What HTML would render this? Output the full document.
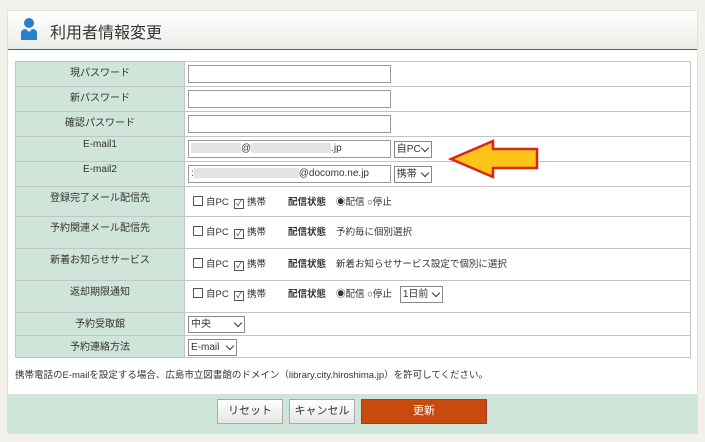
<!DOCTYPE html><html><head><meta charset="utf-8"><style>
body{margin:0;width:705px;height:442px;background:#f2f1ec;font-family:"Liberation Sans","Noto Sans CJK JP",sans-serif;font-size:10px;color:#333;position:relative;overflow:hidden}
.p{position:absolute;left:7px;top:10px;width:689px;height:422px;background:#fff;border:1px solid #e2e2dc}
.hd{position:absolute;left:0;top:0;width:689px;height:38px;background:linear-gradient(#fff,#eceeea);border-bottom:1px solid #3f6655}
.hd span{position:absolute;left:42px;top:8px;font-size:16px;color:#333}
table{position:absolute;left:7px;top:50px;width:676px;border-collapse:collapse}
td{border:1px solid #c4c4c4;padding:0;vertical-align:top}
td.l{background:#cfe5da;width:168px;text-align:center;padding-top:2px}
td.v{padding-left:3px}
.in{display:inline-block;border:1px solid #999;height:18px;background:#fff;vertical-align:middle;margin-top:3px;line-height:16px;font-size:10px;box-sizing:border-box;white-space:nowrap;overflow:hidden}
.sel{display:inline-block;position:relative;border:1px solid #888;height:17px;background:#fff;margin-top:3px;line-height:15px;box-sizing:border-box;padding-left:2px;font-size:10px;vertical-align:middle;white-space:nowrap}
.sel i{position:absolute;right:3px;top:5px;width:5px;height:5px;border-right:1.3px solid #333;border-bottom:1.3px solid #333;transform:rotate(45deg);top:3px}
.c{padding:7px 0 0 8px;font-size:9.5px;white-space:nowrap}
.cb{display:inline-block;width:8px;height:8px;border:1px solid #555;vertical-align:-1px;margin-right:3px;font-size:8px;line-height:8px;text-align:center}
b{margin:0 10px 0 22px}
.bl{display:inline-block;background:#e4e4e4;height:10px;vertical-align:middle}
.note{position:absolute;left:7px;top:356px;font-size:9.5px}
.ft{position:absolute;left:0;top:383px;width:689px;height:39px;background:#cfe5da}
.bt{position:absolute;top:5px;height:25px;box-sizing:border-box;border:1px solid #aaa;background:linear-gradient(#fff,#e6e6e6);text-align:center;line-height:23px;font-size:11px}
</style></head><body><div class="p">
<div class="hd"><svg style="position:absolute;left:12px;top:6px" width="18" height="24"><circle cx="9" cy="6" r="5" fill="#2a7fc8"/><path d="M1 23 L1 16 Q1 12 6 12 L9 15 L12 12 Q17 12 17 16 L17 23Z" fill="#2a7fc8"/></svg><span>利用者情報変更</span></div>
<table>
<tr style="height:25px"><td class="l">現パスワード</td><td class="v"><span class="in" style="width:203px"></span></td></tr>
<tr style="height:25px"><td class="l">新パスワード</td><td class="v"><span class="in" style="width:203px"></span></td></tr>
<tr style="height:25px"><td class="l">確認パスワード</td><td class="v"><span class="in" style="width:203px"></span></td></tr>
<tr style="height:25px"><td class="l">E-mail1</td><td class="v"><span class="in" style="width:203px;padding-left:2px"><span class="bl" style="width:50px"></span>@<span class="bl" style="width:80px"></span>.jp</span> <span class="sel" style="width:38px">自PC<i></i></span></td></tr>
<tr style="height:25px"><td class="l">E-mail2</td><td class="v"><span class="in" style="width:203px;padding-left:2px">:<span class="bl" style="width:105px"></span>@docomo.ne.jp</span> <span class="sel" style="width:38px">携帯<i></i></span></td></tr>
<tr style="height:30px"><td class="l">登録完了メール配信先</td><td class="c"><span class="cb"></span>自PC &nbsp;<span class="cb">✓</span>携帯<b>配信状態</b>◉配信 ○停止</td></tr>
<tr style="height:32px"><td class="l">予約関連メール配信先</td><td class="c"><span class="cb"></span>自PC &nbsp;<span class="cb">✓</span>携帯<b>配信状態</b>予約毎に個別選択</td></tr>
<tr style="height:32px"><td class="l">新着お知らせサービス</td><td class="c"><span class="cb"></span>自PC &nbsp;<span class="cb">✓</span>携帯<b>配信状態</b>新着お知らせサービス設定で個別に選択</td></tr>
<tr style="height:32px"><td class="l">返却期限通知</td><td class="c" style="padding-top:5px"><span class="cb"></span>自PC &nbsp;<span class="cb">✓</span>携帯<b>配信状態</b>◉配信 ○停止 &nbsp;&nbsp;<span class="sel" style="width:43px;margin-top:0">1日前<i></i></span></td></tr>
<tr style="height:23px"><td class="l">予約受取館</td><td class="v"><span class="sel" style="width:57px">中央<i></i></span></td></tr>
<tr style="height:22px"><td class="l">予約連絡方法</td><td class="v"><span class="sel" style="width:49px">E-mail<i></i></span></td></tr>
</table>
<div class="note">携帯電話のE-mailを設定する場合、広島市立図書館のドメイン（library.city.hiroshima.jp）を許可してください。</div>
<div class="ft">
<div class="bt" style="left:209px;width:66px">リセット</div>
<div class="bt" style="left:281px;width:66px">キャンセル</div>
<div class="bt" style="left:353px;width:126px;background:#c94a0f;border-color:#a33;color:#fff">更新</div>
</div></div>
<svg style="position:absolute;left:0;top:0" width="705" height="442"><polygon points="451,159 493,141 493,149 537,149 537,168 493,168 493,177" fill="#fcc318" stroke="#d8261c" stroke-width="2.5" stroke-linejoin="miter"/></svg>
</body></html>
